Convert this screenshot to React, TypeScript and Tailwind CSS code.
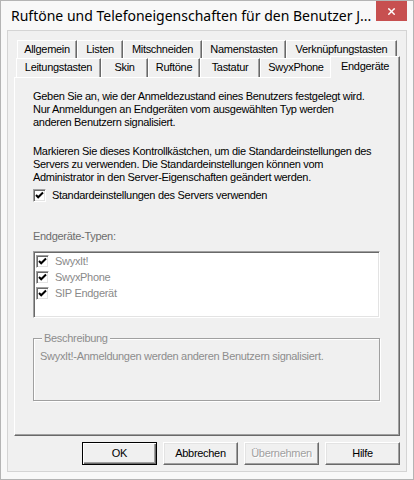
import * as React from "react";
import { X } from "lucide-react";

const ui = { fontFamily: '"Liberation Sans", Arial, sans-serif' };
const title = { fontFamily: '"Noto Sans", "Open Sans", sans-serif' };

function Check() {
  return (
    <span className="flex h-[13px] w-[13px] shrink-0 items-center justify-center border border-t-[#a0a0a0] border-l-[#a0a0a0] border-r-white border-b-white bg-white shadow-[inset_1px_1px_0_#696969,inset_-1px_-1px_0_#e3e3e3]">
      <svg width="9" height="9" viewBox="0 0 9 9">
        <polyline points="1,4 3.2,6.3 8,1.5" fill="none" stroke="#000" strokeWidth="2" />
      </svg>
    </span>
  );
}

function Tab({
  label,
  w,
  selected,
}: {
  label: string;
  w: string;
  selected?: boolean;
}) {
  return (
    <div
      className={
        selected
          ? `relative z-10 -mb-[1px] -ml-[2px] flex h-[22px] items-start justify-center border-l border-t border-r border-l-white border-t-white border-r-[#696969] bg-[#f0f0f0] pt-[3px] shadow-[inset_-1px_0_0_#a0a0a0] ${w}`
          : `flex h-full items-start justify-center border-l border-t border-r border-l-white border-t-white border-r-[#696969] bg-[#f0f0f0] pt-[2px] shadow-[inset_-1px_0_0_#a0a0a0] ${w}`
      }
    >
      {label}
    </div>
  );
}

function Btn({
  label,
  def,
  disabled,
}: {
  label: string;
  def?: boolean;
  disabled?: boolean;
}) {
  return (
    <div
      className={
        def
          ? "flex h-[23px] w-[75px] items-center justify-center border border-[#000] bg-[#f0f0f0] shadow-[inset_1px_1px_0_#fff,inset_-1px_-1px_0_#696969,inset_-2px_-2px_0_#a0a0a0]"
          : "flex h-[23px] w-[75px] items-center justify-center border border-t-white border-l-white border-r-[#696969] border-b-[#696969] bg-[#f0f0f0] shadow-[inset_-1px_-1px_0_#a0a0a0,inset_1px_1px_0_#e3e3e3]"
      }
    >
      <span className={disabled ? "text-[#a0a0a0] [text-shadow:1px_1px_0_#fff]" : "text-black"}>
        {label}
      </span>
    </div>
  );
}

export default function App() {
  return (
    <div
      className="flex h-[480px] w-[414px] flex-col border border-[#b4b4b4] bg-[#f8f8f8] text-[11px] leading-[13px] tracking-[-0.3px] text-black"
      style={ui}
    >
      {/* title bar */}
      <div className="flex h-[29px] shrink-0 items-start">
        <div
          className="flex-1 overflow-hidden whitespace-nowrap pl-[10px] pt-[5px] text-[14px] leading-[19px] tracking-normal text-black"
          style={title}
        >
          Ruftöne und Telefoneigenschaften für den Benutzer J...
        </div>
        <div className="mr-[6px] flex h-[20px] w-[31px] shrink-0 items-center justify-center bg-[#c75050]">
          <X size={11} strokeWidth={3} color="#fff" />
        </div>
      </div>

      {/* client area */}
      <div className="mx-[6px] mb-[7px] flex flex-1 flex-col border border-[#d4d4d4] bg-[#f0f0f0] px-[6px] pt-[9px]">
        {/* tabs */}
        <div className="flex h-[18px] pl-[3px]">
          <Tab label="Allgemein" w="w-[60px]" />
          <Tab label="Listen" w="w-[46px]" />
          <Tab label="Mitschneiden" w="w-[79px]" />
          <Tab label="Namenstasten" w="w-[84px]" />
          <Tab label="Verknüpfungstasten" w="w-[111px]" />
        </div>
        <div className="flex h-[19px] items-end pl-[2px]">
          <Tab label="Leitungstasten" w="w-[85px]" />
          <Tab label="Skin" w="w-[47px]" />
          <Tab label="Ruftöne" w="w-[52px]" />
          <Tab label="Tastatur" w="w-[60px]" />
          <Tab label="SwyxPhone" w="w-[72px]" />
          <Tab label="Endgeräte" w="w-[70px]" selected />
        </div>

        {/* tab panel */}
        <div className="flex h-[359px] w-[386px] flex-col whitespace-nowrap border border-t-white border-l-white border-r-[#696969] border-b-[#696969] pl-[18px] pr-[19px] pt-[12px] shadow-[inset_-1px_-1px_0_#a0a0a0]">
          <p>
            Geben Sie an, wie der Anmeldezustand eines Benutzers festgelegt wird.
            <br />
            Nur Anmeldungen an Endgeräten vom ausgewählten Typ werden
            <br />
            anderen Benutzern signalisiert.
          </p>
          <p className="mt-[16px]">
            Markieren Sie dieses Kontrollkästchen, um die Standardeinstellungen des
            <br />
            Servers zu verwenden. Die Standardeinstellungen können vom
            <br />
            Administrator in den Server-Eigenschaften geändert werden.
          </p>
          <label className="mt-[5px] flex h-[13px] items-center gap-[6px]">
            <Check />
            <span>Standardeinstellungen des Servers verwenden</span>
          </label>

          <div className="mt-[28px] text-[#6d6d6d]">Endgeräte-Typen:</div>

          <div className="mt-[8px] h-[67px] w-[347px] border border-t-[#a0a0a0] border-l-[#a0a0a0] border-r-white border-b-white bg-white pl-[2px] pt-[1px] shadow-[inset_1px_1px_0_#696969,inset_-1px_-1px_0_#e3e3e3]">
            {["SwyxIt!", "SwyxPhone", "SIP Endgerät"].map((t) => (
              <div key={t} className="flex h-[16px] items-center gap-[6px]">
                <Check />
                <span className="text-[#8a8a8a]">{t}</span>
              </div>
            ))}
          </div>

          {/* group box */}
          <div className="relative mt-[20px] h-[63px] w-[347px] border border-[#a0a0a0] shadow-[1px_1px_0_#fff,inset_1px_1px_0_#fff]">
            <span className="absolute -top-[7px] left-[8px] bg-[#f0f0f0] px-[2px] text-[#8d8d8d]">
              Beschreibung
            </span>
            <div className="pl-[6px] pt-[11px] text-[#8d8d8d]">
              SwyxIt!-Anmeldungen werden anderen Benutzern signalisiert.
            </div>
          </div>
        </div>

        {/* buttons */}
        <div className="mt-[6px] flex justify-end gap-[6px]">
          <Btn label="OK" def />
          <Btn label="Abbrechen" />
          <Btn label="Übernehmen" disabled />
          <Btn label="Hilfe" />
        </div>
      </div>
    </div>
  );
}
